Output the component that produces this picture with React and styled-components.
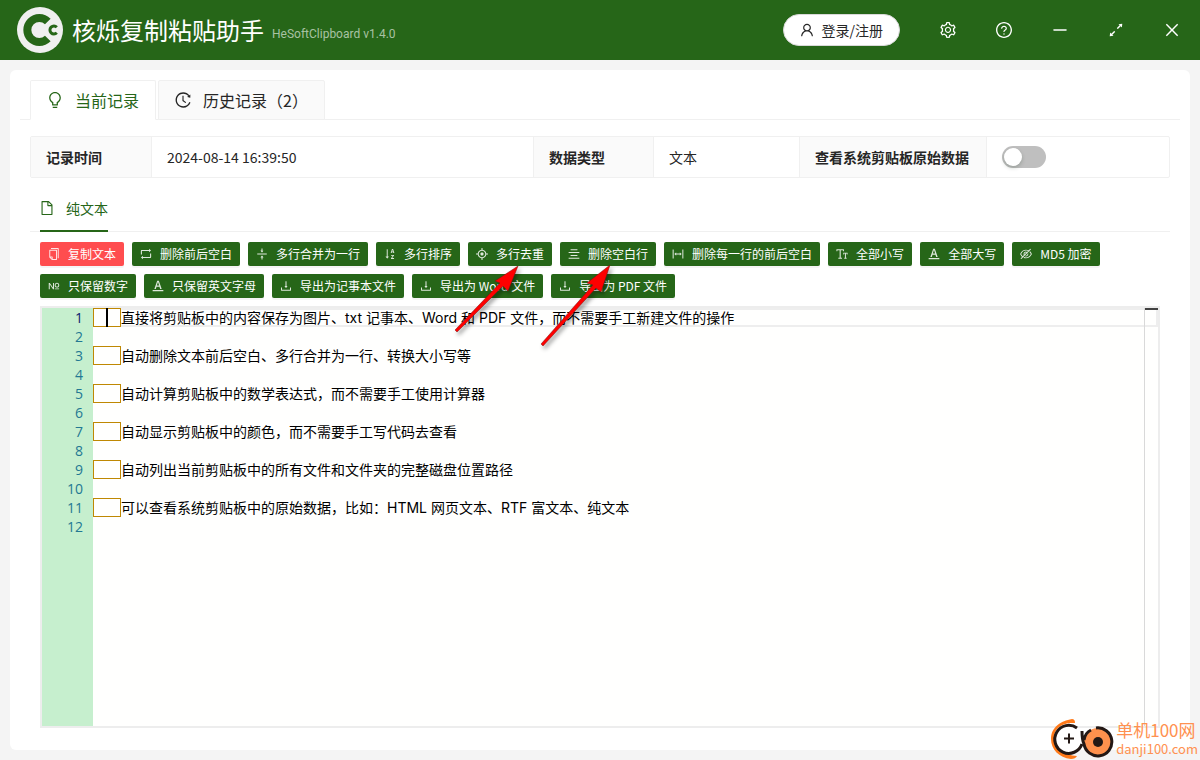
import React, { useState } from 'react';
import styled, { createGlobalStyle, css } from 'styled-components';
import {
    AiOutlineAim,
    AiOutlineAlignCenter,
    AiOutlineArrowsAlt,
    AiOutlineBulb,
    AiOutlineClose,
    AiOutlineColumnWidth,
    AiOutlineCopy,
    AiOutlineDownload,
    AiOutlineEyeInvisible,
    AiOutlineFieldNumber,
    AiOutlineFile,
    AiOutlineFontColors,
    AiOutlineFontSize,
    AiOutlineHistory,
    AiOutlineMinus,
    AiOutlineQuestionCircle,
    AiOutlineRetweet,
    AiOutlineSetting,
    AiOutlineSortAscending,
    AiOutlineUser,
    AiOutlineVerticalAlignMiddle,
} from 'react-icons/ai';

const GREEN = '#266618';
const LINE = '#f0f0f0';

const GlobalStyle = createGlobalStyle`
    * {
        box-sizing: border-box;
    }

    body {
        margin: 0;
        background-color: #f4f4f4;
        color: #262626;
        font-family: 'Noto Sans CJK SC', sans-serif;
        font-size: 14px;
        line-height: 22px;
    }

    button, textarea {
        font-family: inherit;
    }
`;

const Page = styled.div`
    position: relative;
    display: flex;
    flex-direction: column;
    min-height: 100vh;
    overflow: hidden;
`;

// Title bar
const Header = styled.header`
    display: flex;
    align-items: center;
    height: 60px;
    padding: 0 8px 0 16px;
    background-color: ${GREEN};
    color: #fff;
`;

const Title = styled.h1`
    margin: 0 8px;
    font-size: 24px;
    font-weight: 400;
    line-height: 32px;
`;

const Version = styled.span`
    flex: 1;
    padding-top: 8px;
    font-family: Roboto, sans-serif;
    font-size: 12px;
    line-height: 20px;
    color: #a8c2a3;
`;

const LoginButton = styled.button`
    display: flex;
    align-items: center;
    gap: 8px;
    height: 32px;
    margin-right: 28px;
    padding: 0 16px;
    border: 1px solid #d9d9d9;
    border-radius: 16px;
    background-color: #fff;
    color: #262626;
    font-size: 14px;
    cursor: pointer;
`;

const WindowButtons = styled.div`
    display: flex;
    gap: 16px;
`;

const WindowButton = styled.button`
    display: flex;
    align-items: center;
    justify-content: center;
    width: 40px;
    height: 40px;
    padding: 0;
    border: 0;
    background: none;
    color: #fff;
    cursor: pointer;
`;

const Card = styled.main`
    display: flex;
    flex: 1;
    flex-direction: column;
    margin: 10px;
    padding: 10px 10px 22px;
    border-radius: 6px;
    background-color: #fff;
`;

// Top level tabs
const CardTabs = styled.div`
    display: flex;
    gap: 2px;
    padding-left: 10px;
    border-bottom: 1px solid ${LINE};
`;

const CardTab = styled.button`
    display: flex;
    align-items: center;
    gap: 12px;
    height: 40px;
    margin-bottom: -1px;
    padding: 0 16px;
    border: 1px solid ${LINE};
    border-radius: 2px 2px 0 0;
    background-color: #fafafa;
    color: #262626;
    font-size: 16px;
    cursor: pointer;

    ${(props) => props.$active && css`
        border-bottom-color: #fff;
        background-color: #fff;
        color: ${GREEN};
    `}
`;

const Content = styled.div`
    display: flex;
    flex: 1;
    flex-direction: column;
    padding: 16px 10px 0;
`;

// Record details
const Details = styled.table`
    width: 100%;
    border: 1px solid ${LINE};
    border-collapse: separate;
    border-spacing: 0;
    border-radius: 2px;
    table-layout: fixed;

    th, td {
        height: 40px;
        padding: 0 15px;
        text-align: left;
    }

    th {
        background-color: #fafafa;
        font-weight: 700;
    }

    th, td:not(:last-child) {
        border-right: 1px solid ${LINE};
    }

    label {
        cursor: pointer;
    }
`;

const Column = styled.col`
    width: ${(props) => props.$width};
`;

const Switch = styled.input`
    display: block;
    appearance: none;
    width: 44px;
    height: 22px;
    margin: 0;
    padding: 2px;
    border-radius: 11px;
    background-color: #bfbfbf;
    cursor: pointer;

    &::before {
        content: '';
        display: block;
        width: 18px;
        height: 18px;
        border-radius: 50%;
        background-color: #fff;
        box-shadow: 0 2px 4px rgba(0, 35, 11, 0.2);
    }

    &:checked {
        background-color: ${GREEN};
    }

    &:checked::before {
        margin-left: 22px;
    }
`;

// Data format tabs
const LineTabs = styled.div`
    display: flex;
    margin-top: 8px;
    padding: 0 10px;
    border-bottom: 1px solid ${LINE};
`;

const LineTab = styled.button`
    display: flex;
    align-items: center;
    gap: 12px;
    height: 46px;
    margin-bottom: -1px;
    padding: 0;
    border: 0;
    border-bottom: 2px solid ${GREEN};
    background: none;
    color: ${GREEN};
    font-size: 14px;
    cursor: pointer;
`;

const Toolbar = styled.div`
    display: flex;
    flex-wrap: wrap;
    gap: 8px;
    padding: 10px 10px 8px;
`;

const ToolButton = styled.button`
    display: flex;
    align-items: center;
    gap: 8px;
    height: 24px;
    padding: 0 8px;
    border: 0;
    border-radius: 2px;
    background-color: ${(props) => (props.$danger ? '#ff4d4f' : GREEN)};
    box-shadow: 0 2px 0 rgba(0, 0, 0, 0.04);
    color: #fff;
    font-size: 12px;
    line-height: 20px;
    white-space: nowrap;
    cursor: pointer;

    svg {
        opacity: 0.85;
    }
`;

// Text editor
const Editor = styled.div`
    display: flex;
    flex: 1;
    margin: 0 10px;
    border: 2px solid #ededed;
    background-color: #fffffe;
    font-size: 14px;
    line-height: 19px;
`;

const Gutter = styled.ol`
    width: 51px;
    margin: 0;
    padding: 0 10px 0 0;
    background-color: #c6efce;
    color: #237893;
    font-family: 'Open Sans', sans-serif;
    text-align: right;
    list-style: none;

    li:first-child {
        color: #0b216f;
    }
`;

const EditorBody = styled.div`
    position: relative;
    flex: 1;
`;

// Decorations drawn under the text, one row per line
const Decorations = styled.div`
    position: absolute;
    inset: 0;
`;

const DecorationRow = styled.div`
    height: 19px;
    box-shadow: ${(props) => (props.$current ? 'inset 0 0 0 2px #eee' : 'none')};
`;

const BlankMark = styled.span`
    display: block;
    width: 28px;
    height: 19px;
    border: 1px solid #bf8803;
    background-color: #fffffe;
`;

const Caret = styled.span`
    position: absolute;
    left: 13px;
    top: 0;
    width: 2px;
    height: 19px;
    background-color: #000;
`;

const Ruler = styled.div`
    position: absolute;
    top: 0;
    right: 0;
    bottom: 0;
    width: 14px;
    border-left: 1px solid #d9d9d9;

    &::before {
        content: '';
        display: block;
        height: 2px;
        background-color: #424242;
    }
`;

const TextArea = styled.textarea`
    position: relative;
    display: block;
    width: 100%;
    height: 100%;
    padding: 0;
    border: 0;
    outline: 0;
    background: transparent;
    color: #000;
    font-family: Inter, 'Noto Sans CJK SC', sans-serif;
    font-size: 14px;
    line-height: 19px;
    white-space: pre;
    overflow: hidden;
    resize: none;
`;

const Arrows = styled.svg`
    position: absolute;
    left: 440px;
    top: 250px;
    pointer-events: none;

    g {
        filter: drop-shadow(2px 3px 2px rgba(0, 0, 0, 0.4));
    }
`;

// Site mark in the bottom corner
const SiteMark = styled.div`
    position: absolute;
    right: 2px;
    bottom: 0;
    display: flex;
    align-items: center;
    gap: 2px;
    color: #ff9150;
    pointer-events: none;
`;

const SiteName = styled.div`
    font-size: 17px;
    line-height: 20px;
`;

const SiteAddress = styled.div`
    font-size: 13px;
    line-height: 18px;
`;

const tools = [
    { label: '复制文本', icon: AiOutlineCopy, danger: true },
    { label: '删除前后空白', icon: AiOutlineRetweet },
    { label: '多行合并为一行', icon: AiOutlineVerticalAlignMiddle },
    { label: '多行排序', icon: AiOutlineSortAscending },
    { label: '多行去重', icon: AiOutlineAim },
    { label: '删除空白行', icon: AiOutlineAlignCenter },
    { label: '删除每一行的前后空白', icon: AiOutlineColumnWidth },
    { label: '全部小写', icon: AiOutlineFontSize },
    { label: '全部大写', icon: AiOutlineFontColors },
    { label: 'MD5 加密', icon: AiOutlineEyeInvisible },
    { label: '只保留数字', icon: AiOutlineFieldNumber },
    { label: '只保留英文字母', icon: AiOutlineFontColors },
    { label: '导出为记事本文件', icon: AiOutlineDownload },
    { label: '导出为 Word 文件', icon: AiOutlineDownload },
    { label: '导出为 PDF 文件', icon: AiOutlineDownload },
];

const windowActions = [
    { label: '设置', icon: AiOutlineSetting },
    { label: '帮助', icon: AiOutlineQuestionCircle },
    { label: '最小化', icon: AiOutlineMinus },
    { label: '最大化', icon: AiOutlineArrowsAlt },
    { label: '关闭', icon: AiOutlineClose },
];

const initialText = [
    '  直接将剪贴板中的内容保存为图片、txt 记事本、Word 和 PDF 文件，而不需要手工新建文件的操作',
    '',
    '  自动删除文本前后空白、多行合并为一行、转换大小写等',
    '',
    '  自动计算剪贴板中的数学表达式，而不需要手工使用计算器',
    '',
    '  自动显示剪贴板中的颜色，而不需要手工写代码去查看',
    '',
    '  自动列出当前剪贴板中的所有文件和文件夹的完整磁盘位置路径',
    '',
    '  可以查看系统剪贴板中的原始数据，比如：HTML 网页文本、RTF 富文本、纯文本',
    '',
].join('\n').replace(/^ {2}/gm, '\u3000\u3000');

// The icon set leaves a margin of 64 units round every glyph, trim it
const Icon = ({ of: Glyph, size }) => <Glyph size={size} viewBox="64 64 896 896" />;

const Logo = () => (
    <svg width="48" height="48" viewBox="0 0 48 48" aria-hidden="true">
        <circle cx="24" cy="24" r="23" fill="#f0f0f0" />
        <path d="M31.800 15.500A12 12 0 1 0 31.800 32.500" fill="none" stroke={GREEN} strokeWidth="8" />
        <circle cx="38" cy="24" r="7.500" fill="#f0f0f0" />
        <path d="M40.800 21.200A4 4 0 1 0 40.800 26.800" fill="none" stroke={GREEN} strokeWidth="3" />
    </svg>
);

const SiteLogo = () => (
    <svg width="64" height="42" viewBox="0 0 64 42" aria-hidden="true">
        <path d="M22 1C11 3 1 9 1 21c0 10 8 19 20 20 3 0 5-1 6-3C14 37 4 31 4 20 4 11 11 6 20 5h5c0-3-1-4-3-4z" fill="#ff7a1a" />
        <path d="M27 10A14 14 0 1 0 32 26" fill="#fff" stroke="#231815" strokeWidth="3" />
        <path d="M14 20.500h10M19 15.500v10" stroke="#231815" strokeWidth="2" />
        <circle cx="48" cy="24" r="14" fill="#ff914d" />
        <path d="M32 13c0 5 0 9 2 13a14 14 0 1 0 12-16M34 22q1-7 7-10" fill="none" stroke="#231815" strokeWidth="3" />
        <circle cx="48" cy="24" r="5" fill="#231815" />
    </svg>
);

const App = () => {
    const [activeTab, setActiveTab] = useState('current');
    const [text, setText] = useState(initialText);
    const lines = text.split('\n');

    return (
        <Page>
            <GlobalStyle />
            <Header>
                <Logo />
                <Title>核烁复制粘贴助手</Title>
                <Version>HeSoftClipboard v1.4.0</Version>
                <LoginButton type="button">
                    <Icon of={AiOutlineUser} size={14} />
                    登录/注册
                </LoginButton>
                <WindowButtons>
                    {windowActions.map(({ label, icon }) => (
                        <WindowButton key={label} type="button" aria-label={label}>
                            <Icon of={icon} size={16} />
                        </WindowButton>
                    ))}
                </WindowButtons>
            </Header>
            <Card>
                <CardTabs role="tablist">
                    <CardTab
                        type="button"
                        role="tab"
                        aria-selected={activeTab === 'current'}
                        $active={activeTab === 'current'}
                        onClick={() => setActiveTab('current')}
                    >
                        <Icon of={AiOutlineBulb} size={16} />
                        当前记录
                    </CardTab>
                    <CardTab
                        type="button"
                        role="tab"
                        aria-selected={activeTab === 'history'}
                        $active={activeTab === 'history'}
                        onClick={() => setActiveTab('history')}
                    >
                        <Icon of={AiOutlineHistory} size={16} />
                        历史记录（2）
                    </CardTab>
                </CardTabs>
                <Content>
                    <Details>
                        <colgroup>
                            <Column $width="121px" />
                            <Column $width="auto" />
                            <Column $width="120px" />
                            <Column $width="146px" />
                            <Column $width="187px" />
                            <Column $width="182px" />
                        </colgroup>
                        <tbody>
                            <tr>
                                <th>记录时间</th>
                                <td>2024-08-14 16:39:50</td>
                                <th>数据类型</th>
                                <td>文本</td>
                                <th><label htmlFor="raw-data">查看系统剪贴板原始数据</label></th>
                                <td><Switch id="raw-data" type="checkbox" role="switch" /></td>
                            </tr>
                        </tbody>
                    </Details>
                    <LineTabs role="tablist">
                        <LineTab type="button" role="tab" aria-selected="true">
                            <Icon of={AiOutlineFile} size={14} />
                            纯文本
                        </LineTab>
                    </LineTabs>
                    <Toolbar>
                        {tools.map(({ label, icon, danger }) => (
                            <ToolButton key={label} type="button" $danger={danger}>
                                <Icon of={icon} size={12} />
                                {label}
                            </ToolButton>
                        ))}
                    </Toolbar>
                    <Editor>
                        <Gutter>
                            {lines.map((line, index) => (
                                <li key={index}>{index + 1}</li>
                            ))}
                        </Gutter>
                        <EditorBody>
                            <Decorations>
                                {lines.map((line, index) => (
                                    <DecorationRow key={index} $current={index === 0}>
                                        {line.startsWith('\u3000') && <BlankMark />}
                                    </DecorationRow>
                                ))}
                                <Caret />
                                <Ruler />
                            </Decorations>
                            <TextArea
                                aria-label="纯文本"
                                spellCheck={false}
                                value={text}
                                onChange={(e) => setText(e.target.value)}
                            />
                        </EditorBody>
                    </Editor>
                </Content>
            </Card>
            {/* Pointers to the duplicate and blank line tools */}
            <Arrows width="190" height="110" viewBox="440 250 190 110" aria-hidden="true">
                <g fill="#fe0000" stroke="#7a1010" strokeWidth="0.5">
                    <path d="M518 266L508 291L503 286L457 332L455 330L500 283L495 281Z" />
                    <path d="M610 265L601 292L596 288L543 346L541 344L593 285L587 283Z" />
                </g>
            </Arrows>
            <SiteMark>
                <SiteLogo />
                <div>
                    <SiteName>单机100网</SiteName>
                    <SiteAddress>danji100.com</SiteAddress>
                </div>
            </SiteMark>
        </Page>
    );
};

export default App;
